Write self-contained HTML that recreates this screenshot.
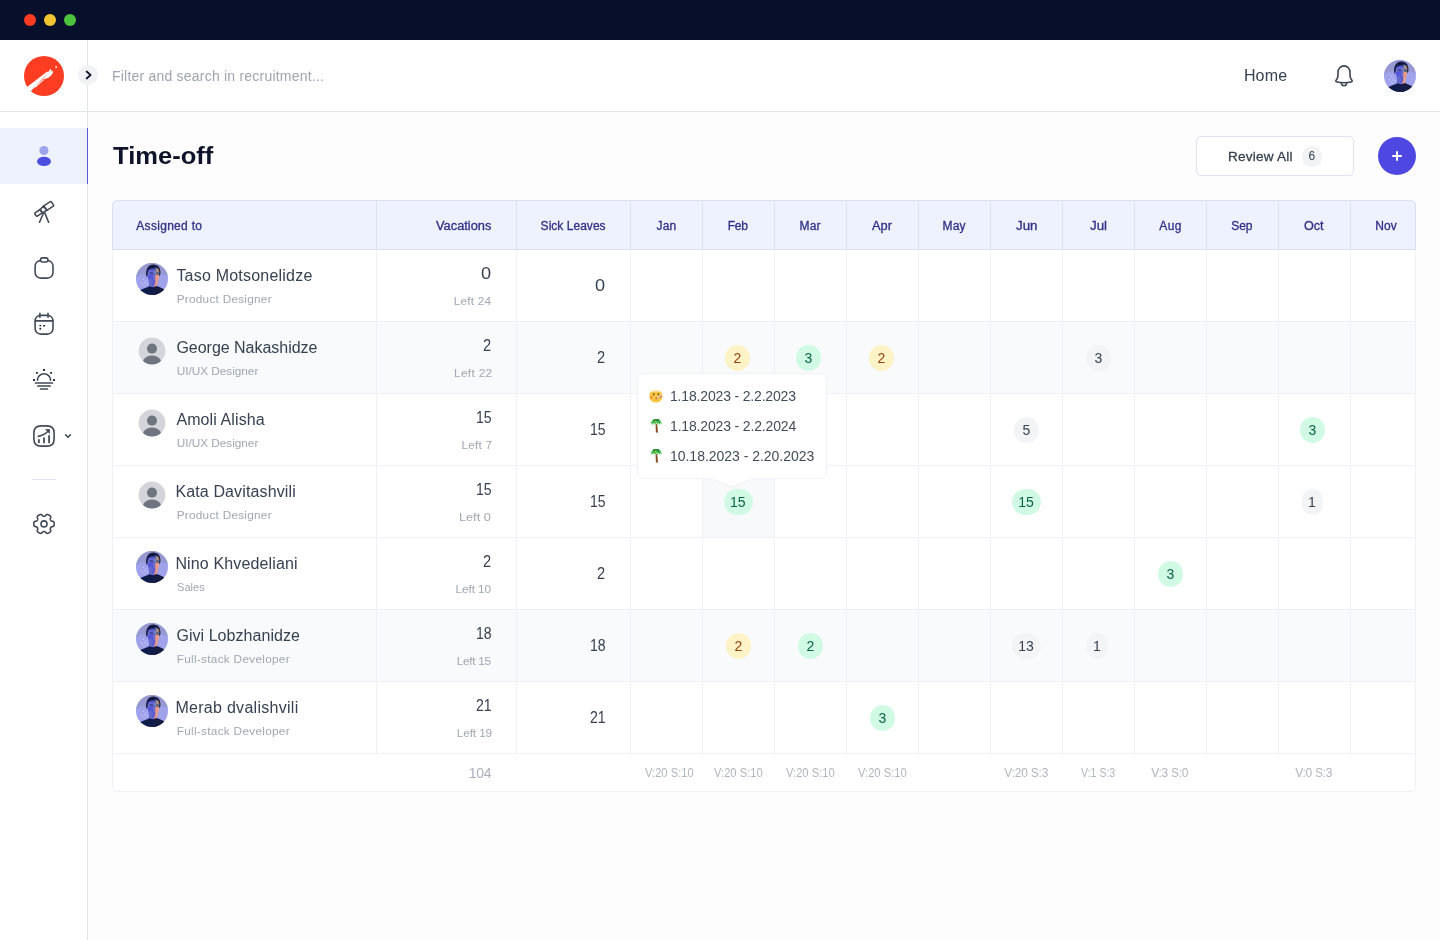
<!DOCTYPE html>
<html lang="en">
<head>
<meta charset="utf-8">
<title>Time-off</title>
<style>
*{box-sizing:border-box;margin:0;padding:0}
html,body{width:1440px;height:940px;overflow:hidden}
body{font-family:"Liberation Sans",sans-serif;background:#fdfdfe;position:relative}
.abs{position:absolute}
svg{display:block;overflow:visible}
.t{position:absolute;white-space:nowrap;line-height:1;font-family:"Liberation Sans",sans-serif}
#titlebar{position:absolute;left:0;top:0;width:1440px;height:40px;background:#070f2b}
.tl{position:absolute;top:14px;width:12px;height:12px;border-radius:50%}
#topnav{position:absolute;left:0;top:40px;width:1440px;height:72px;background:#fff;border-bottom:1px solid #e3e5ec}
#sidebar{position:absolute;left:0;top:40px;width:88px;height:900px;background:#fff;border-right:1px solid #e3e5ec}
#navactive{position:absolute;left:0;top:128px;width:88px;height:56px;background:#eef2ff;border-right:1px solid #5a55dd}
#sdiv{position:absolute;left:32px;top:479px;width:24px;height:1px;background:#e1e4ee}
#review{position:absolute;left:1196px;top:136px;width:158px;height:40px;border:1px solid #e1e3ea;border-radius:5px;background:#fff}
#badge{position:absolute;left:1302px;top:145.500px;width:20px;height:21px;border-radius:50%;background:#f2f3f5}
#plus{position:absolute;left:1378px;top:137px;width:38px;height:38px;border-radius:50%;background:#4e47e2}
#table{position:absolute;left:112px;top:200px;width:1304px;height:592px;border:1px solid #f0f1f5;border-radius:5px;background:#fff}
#thead{position:absolute;left:112px;top:200px;width:1304px;height:50px;background:#eef2ff;border:1px solid #dcdfee;border-radius:5px 5px 0 0}
#tip{position:absolute;left:637px;top:373px;width:190px;height:106px;background:#fff;border:1px solid #f1f2f5;border-radius:7px}
</style>
</head>
<body>
<svg width="0" height="0" style="position:absolute">
<defs>
<clipPath id="avc"><circle cx="16" cy="16" r="16"/></clipPath>
<clipPath id="gvc"><circle cx="14" cy="14" r="13.400"/></clipPath>
</defs>
</svg>
<div id="titlebar">
<div class="tl" style="left:24px;background:#fb3c22"></div>
<div class="tl" style="left:44px;background:#f0c330"></div>
<div class="tl" style="left:64px;background:#4cc13c"></div>
</div>
<div id="topnav"></div>
<div id="sidebar"></div>
<div class="abs" style="left:0;top:111px;width:88px;height:1px;background:#e3e5ec"></div>
<div id="navactive"></div>
<svg class="abs" style="left:24px;top:56px" width="40" height="40" viewBox="0 0 40 40">
<circle cx="20" cy="20" r="20" fill="#ff3d23"/>
<path d="M2 31.800L23.300 15.500l1 1.200L6.300 35.700l-2.800.8z" fill="#fff"/>
<path d="M18.300 23.800l3.700-4.300 3-4.500 1.300-1.900 1.300.8-.8 1.900 1.600-1.100.8 1.300-1.500 3-3 2.600-3.500 1.500z" fill="#fff"/>
<path d="M10.400 31l8.600-7.500.7.800-8.500 7.400z" fill="#fff"/>
<rect x="31.300" y="10.200" width="1.800" height="1.800" fill="#ffc9c0"/>
</svg>
<div class="abs" style="left:78px;top:65px;width:20px;height:20px;border-radius:50%;background:#f1f2f5"></div>
<svg class="abs" style="left:78px;top:65px" width="20" height="20" viewBox="0 0 20 20" fill="none" stroke="#0e1328" stroke-width="1.700" stroke-linecap="round" stroke-linejoin="round"><path d="M8.600 6.500l4 3.500-4 3.500"/></svg>
<svg class="abs" style="left:24px;top:136px" width="40" height="40" viewBox="0 0 40 40"><circle cx="19.900" cy="14.500" r="4.600" fill="#9ea4eb"/><ellipse cx="20" cy="25.400" rx="7" ry="4.600" fill="#4d4de2"/></svg>
<svg class="abs" style="left:28px;top:196px" width="32" height="32" viewBox="0 0 32 32" fill="none" stroke="#424a58" stroke-width="1.6" stroke-linecap="round" stroke-linejoin="round"><path d="M15.500 10.100L22.300 5.700a.8.800 0 0 1 1.100.2l2.100 3.200a.8.800 0 0 1-.2 1.100L18.900 14.300z"/><path d="M12.100 13.500l3.400-3.400 3.400 4.200-4.600 2.600z"/><path d="M7.200 16.900l4.900-3.400 2.200 3.400-5 3.200a.8.800 0 0 1-1.100-.2l-1.300-1.900a.8.800 0 0 1 .3-1.100z"/><path d="M15.400 17.200l-3.900 9M16.800 16.900l3.800 9.300"/></svg>
<svg class="abs" style="left:28px;top:252px" width="32" height="32" viewBox="0 0 32 32" fill="none" stroke="#424a58" stroke-width="1.6" stroke-linecap="round" stroke-linejoin="round"><path d="M12.90 8.6 L19.20 8.6 C22.68 8.6 25 10.92 25 14.40 L25 20.30 C25 23.78 22.68 26.1 19.20 26.1 L12.90 26.1 C9.42 26.1 7.1 23.78 7.1 20.30 L7.1 14.40 C7.1 10.92 9.42 8.6 12.90 8.6Z"/><rect x="12.500" y="5.900" width="7.400" height="4.100" rx="2" fill="#fff"/></svg>
<svg class="abs" style="left:28px;top:308px" width="32" height="32" viewBox="0 0 32 32" fill="none" stroke="#424a58" stroke-width="1.6" stroke-linecap="round" stroke-linejoin="round"><path d="M12.90 7.4 L19.20 7.4 C22.68 7.4 25 9.72 25 13.20 L25 20.30 C25 23.78 22.68 26.1 19.20 26.1 L12.90 26.1 C9.42 26.1 7.1 23.78 7.1 20.30 L7.1 13.20 C7.1 9.72 9.42 7.4 12.90 7.4Z"/><path d="M7.300 12.900H24.800M11.900 5.300v4M20 5.300v4"/><g fill="#1c2140" stroke="none"><circle cx="12.300" cy="17.600" r=".95"/><rect x="15" y="16.900" width="2" height="1.500" rx=".5"/><circle cx="12.300" cy="20.700" r=".95"/></g></svg>
<svg class="abs" style="left:28px;top:364px" width="32" height="32" viewBox="0 0 32 32" fill="none" stroke="#424a58" stroke-width="1.6" stroke-linecap="round" stroke-linejoin="round"><path d="M9.400 16.300a6.600 6.600 0 0 1 13.200 0"/><path d="M7.500 19H24.500M9.800 22H22.200M12.600 25H19.400" stroke-width="1.700"/><g fill="#1f2536" stroke="none"><rect x="15.050" y="5.050" width="1.900" height="1.900" rx=".3"/><rect x="7.950" y="7.950" width="1.900" height="1.900" rx=".3"/><rect x="22.150" y="7.950" width="1.900" height="1.900" rx=".3"/><rect x="5.050" y="15.050" width="1.900" height="1.900" rx=".3"/><rect x="25.050" y="15.050" width="1.900" height="1.900" rx=".3"/></g></svg>
<svg class="abs" style="left:28px;top:420px" width="48" height="32" viewBox="0 0 48 32" fill="none" stroke="#424a58" stroke-width="1.6" stroke-linecap="round" stroke-linejoin="round"><path d="M13.10 5.9 L18.90 5.9 C23.36 5.9 26.1 8.64 26.1 13.10 L26.1 18.90 C26.1 23.36 23.36 26.1 18.90 26.1 L13.10 26.1 C8.64 26.1 5.9 23.36 5.9 18.90 L5.9 13.10 C5.9 8.64 8.64 5.9 13.10 5.9Z"/><path d="M10.900 19.900v2.500M16 18.100v4.400M21.100 15.900v6.600" stroke-width="1.800"/><path d="M10.300 16.400c4-.8 7.500-2.600 10.200-5.600"/><path d="M17.900 9.500h3.700v3.600z" fill="#3c4453" stroke-width=".7"/><path d="M37.6 14.8l2.4 2.5 2.4-2.5"/></svg>
<div id="sdiv"></div>
<svg class="abs" style="left:28px;top:508px" width="32" height="32" viewBox="0 0 32 32" fill="none" stroke="#424a58" stroke-width="1.6" stroke-linecap="round" stroke-linejoin="round"><path d="M26.15 15.90 L26.14 16.25 L26.12 16.61 L26.08 16.96 L26.02 17.31 L25.92 17.65 L25.76 17.97 L25.46 18.26 L24.97 18.47 L24.34 18.61 L23.76 18.73 L23.36 18.87 L23.10 19.06 L22.91 19.27 L22.76 19.49 L22.62 19.72 L22.49 19.96 L22.38 20.20 L22.29 20.47 L22.26 20.79 L22.33 21.21 L22.51 21.77 L22.71 22.38 L22.77 22.92 L22.68 23.31 L22.48 23.62 L22.23 23.87 L21.96 24.10 L21.67 24.31 L21.38 24.51 L21.08 24.69 L20.76 24.86 L20.45 25.02 L20.12 25.16 L19.79 25.28 L19.45 25.37 L19.08 25.39 L18.69 25.27 L18.26 24.95 L17.82 24.47 L17.43 24.04 L17.11 23.76 L16.81 23.63 L16.54 23.57 L16.27 23.55 L16.00 23.55 L15.73 23.55 L15.46 23.57 L15.19 23.63 L14.89 23.76 L14.57 24.04 L14.18 24.47 L13.74 24.95 L13.31 25.27 L12.92 25.39 L12.55 25.37 L12.21 25.28 L11.88 25.16 L11.55 25.02 L11.24 24.86 L10.93 24.69 L10.62 24.51 L10.33 24.31 L10.04 24.10 L9.77 23.87 L9.52 23.62 L9.32 23.31 L9.23 22.92 L9.29 22.38 L9.49 21.77 L9.67 21.21 L9.74 20.79 L9.71 20.47 L9.62 20.20 L9.51 19.96 L9.38 19.72 L9.24 19.49 L9.09 19.27 L8.90 19.06 L8.64 18.87 L8.24 18.73 L7.66 18.61 L7.03 18.47 L6.54 18.26 L6.24 17.97 L6.08 17.65 L5.98 17.31 L5.92 16.96 L5.88 16.61 L5.86 16.25 L5.85 15.90 L5.86 15.55 L5.88 15.19 L5.92 14.84 L5.98 14.49 L6.08 14.15 L6.24 13.83 L6.54 13.54 L7.03 13.33 L7.66 13.19 L8.24 13.07 L8.64 12.93 L8.90 12.74 L9.09 12.53 L9.24 12.31 L9.38 12.08 L9.51 11.84 L9.62 11.60 L9.71 11.33 L9.74 11.01 L9.67 10.59 L9.49 10.03 L9.29 9.42 L9.23 8.88 L9.32 8.49 L9.52 8.18 L9.77 7.93 L10.04 7.70 L10.33 7.49 L10.62 7.29 L10.92 7.11 L11.24 6.94 L11.55 6.78 L11.88 6.64 L12.21 6.52 L12.55 6.43 L12.92 6.41 L13.31 6.53 L13.74 6.85 L14.18 7.33 L14.57 7.76 L14.89 8.04 L15.19 8.17 L15.46 8.23 L15.73 8.25 L16.00 8.25 L16.27 8.25 L16.54 8.23 L16.81 8.17 L17.11 8.04 L17.43 7.76 L17.82 7.33 L18.26 6.85 L18.69 6.53 L19.08 6.41 L19.45 6.43 L19.79 6.52 L20.12 6.64 L20.45 6.78 L20.76 6.94 L21.08 7.11 L21.38 7.29 L21.67 7.49 L21.96 7.70 L22.23 7.93 L22.48 8.18 L22.68 8.49 L22.77 8.88 L22.71 9.42 L22.51 10.03 L22.33 10.59 L22.26 11.01 L22.29 11.33 L22.38 11.60 L22.49 11.84 L22.62 12.08 L22.76 12.31 L22.91 12.53 L23.10 12.74 L23.36 12.93 L23.76 13.07 L24.34 13.19 L24.97 13.33 L25.46 13.54 L25.76 13.83 L25.92 14.15 L26.02 14.49 L26.08 14.84 L26.12 15.19 L26.14 15.55Z"/><circle cx="16" cy="15.900" r="3"/></svg>
<svg class="abs" style="left:1328px;top:60px" width="32" height="32" viewBox="0 0 32 32" fill="none" stroke="#3c4453" stroke-width="1.600" stroke-linecap="round" stroke-linejoin="round">
<path d="M16 5.900C12.600 5.900 10 8.600 10 12.200V15.500C10 17.300 9.400 18.500 8.400 19.700 7.400 20.900 7.700 21.700 9 22 13 22.900 19 22.900 23 22 24.300 21.700 24.600 20.900 23.600 19.700 22.600 18.500 22 17.300 22 15.500V12.200C22 8.600 19.400 5.900 16 5.900Z"/>
<path d="M13.300 23.700C13.700 25 14.700 25.700 16 25.700 17.300 25.700 18.300 25 18.700 23.700"/>
</svg>
<svg class="abs" style="left:1384px;top:60px" width="32" height="32" viewBox="0 0 32 32"><g clip-path="url(#avc)">
  <rect width="32" height="32" fill="#a1a2ec"/>
  <path d="M0 0h32v13.500c-3-1.500-5.500-2.300-8-2.300H10c-4 0-7 1-10 3.500z" fill="#9899d3"/>
  <g fill="#c9cbf3"><rect x="7" y="16" width="1" height="1"/><rect x="9" y="17.500" width="1" height="1"/><rect x="5" y="19" width="1" height="1"/><rect x="8" y="19.500" width="1" height="1"/><rect x="6" y="21" width="1" height="1"/><rect x="9.500" y="21" width="1" height="1"/><rect x="11" y="20" width="1" height="1"/><rect x="7.500" y="23" width="1" height="1"/></g>
  <path d="M10.300 13.500C9.200 6 12.500 1.600 17.200 1.600c5 0 8 3.400 7.100 10.400l-1.300 1-.8-5.200-9.700-.6-1.200 6.300z" fill="#141a3e"/>
  <path d="M11.700 9.500c0-3.200 2.800-4.300 7.700-3.800v17.900h-6.200v-5c-1-1.800-1.500-4.600-1.500-9.100z" fill="#5355df"/>
  <path d="M11.900 9.200c1.600-1.700 4.200-2 7.500-1.400v3.800c-2.600-.8-5.200-.5-7.400.6z" fill="#6a70bd"/>
  <path d="M13 15l3.200 1.300 1.600 3.200-2 4.100h-2.600v-5z" fill="#6a70c4" opacity=".75"/>
  <path d="M16.500 12.500h2.900v4.500h-1.900z" fill="#6f76b8" opacity=".8"/>
  <path d="M19.400 4.600c2.800.2 4.200 2.400 3.900 5.600l-.3 3.200h-3.600z" fill="#8a8ea3"/>
  <path d="M19.400 11.500l3.600.2c0 3.300-.4 5.500-1.500 7.300l-.6 4.700h-3l1.500-5z" fill="#ea9a80"/>
  <path d="M21.600 6.500h1.500v1.800h-1.500z" fill="#ea7a3a"/>
  <path d="M20 9.300h2.700v2.400H20z" fill="#575b74"/>
  <path d="M13.800 9.500h3.200v1.400h-3.200z" fill="#35379f"/>
  <path d="M2 28c4-1.800 8-3 11.200-4.700 2.300.8 5.800.8 8 0 3 1.300 6 2.500 9 4.200V33H2z" fill="#101c4a"/>
  <path d="M19 23.600c1 0 2-.1 2.200-.3 3 1.300 6 2.500 9 4.200V33H17.500z" fill="#171d42"/>
 </g></svg>
<div id="review"></div>
<div id="badge"></div>
<div id="plus"></div><svg class="abs" style="left:1390px;top:149px" width="14" height="14" viewBox="0 0 14 14" stroke="#fff" stroke-width="2" stroke-linecap="butt"><path d="M7 2.200v9.600M2.200 7h9.600"/></svg>

<!-- table -->
<div id="table"></div>
<div id="thead"></div>
<div class="abs" style="left:113px;top:321px;width:1302px;height:1px;background:#f0f1f4"></div>
<svg class="abs" style="left:136px;top:263px" width="32" height="32" viewBox="0 0 32 32"><g clip-path="url(#avc)">
  <rect width="32" height="32" fill="#a1a2ec"/>
  <path d="M0 0h32v13.500c-3-1.500-5.500-2.300-8-2.300H10c-4 0-7 1-10 3.500z" fill="#9899d3"/>
  <g fill="#c9cbf3"><rect x="7" y="16" width="1" height="1"/><rect x="9" y="17.500" width="1" height="1"/><rect x="5" y="19" width="1" height="1"/><rect x="8" y="19.500" width="1" height="1"/><rect x="6" y="21" width="1" height="1"/><rect x="9.500" y="21" width="1" height="1"/><rect x="11" y="20" width="1" height="1"/><rect x="7.500" y="23" width="1" height="1"/></g>
  <path d="M10.300 13.500C9.200 6 12.500 1.600 17.200 1.600c5 0 8 3.400 7.100 10.400l-1.300 1-.8-5.200-9.700-.6-1.200 6.300z" fill="#141a3e"/>
  <path d="M11.700 9.500c0-3.200 2.800-4.300 7.700-3.800v17.900h-6.200v-5c-1-1.800-1.500-4.600-1.500-9.100z" fill="#5355df"/>
  <path d="M11.900 9.200c1.600-1.700 4.200-2 7.500-1.400v3.800c-2.600-.8-5.200-.5-7.400.6z" fill="#6a70bd"/>
  <path d="M13 15l3.200 1.300 1.600 3.200-2 4.100h-2.600v-5z" fill="#6a70c4" opacity=".75"/>
  <path d="M16.500 12.500h2.900v4.500h-1.900z" fill="#6f76b8" opacity=".8"/>
  <path d="M19.400 4.600c2.800.2 4.200 2.400 3.900 5.600l-.3 3.200h-3.600z" fill="#8a8ea3"/>
  <path d="M19.400 11.500l3.600.2c0 3.300-.4 5.500-1.500 7.300l-.6 4.700h-3l1.500-5z" fill="#ea9a80"/>
  <path d="M21.600 6.500h1.500v1.800h-1.500z" fill="#ea7a3a"/>
  <path d="M20 9.300h2.700v2.400H20z" fill="#575b74"/>
  <path d="M13.800 9.500h3.200v1.400h-3.200z" fill="#35379f"/>
  <path d="M2 28c4-1.800 8-3 11.200-4.700 2.300.8 5.800.8 8 0 3 1.300 6 2.500 9 4.200V33H2z" fill="#101c4a"/>
  <path d="M19 23.600c1 0 2-.1 2.200-.3 3 1.300 6 2.500 9 4.200V33H17.500z" fill="#171d42"/>
 </g></svg>
<div class="abs" style="left:113px;top:322px;width:1302px;height:71px;background:#f9fafc"></div>
<div class="abs" style="left:113px;top:393px;width:1302px;height:1px;background:#f0f1f4"></div>
<svg class="abs" style="left:138px;top:337px" width="28" height="28" viewBox="0 0 28 28"><circle cx="14" cy="14" r="13.400" fill="#d3d5da"/>
 <g clip-path="url(#gvc)" fill="#6e7480">
  <circle cx="14" cy="11.600" r="5"/>
  <ellipse cx="14" cy="26.500" rx="9.600" ry="8"/>
 </g></svg>
<div class="abs" style="left:725.00px;top:345px;width:25px;height:26px;border-radius:13px;background:#fef3c7"></div>
<div class="abs" style="left:796.00px;top:345px;width:25px;height:26px;border-radius:13px;background:#d1fae5"></div>
<div class="abs" style="left:869.00px;top:345px;width:25px;height:26px;border-radius:13px;background:#fef3c7"></div>
<div class="abs" style="left:1086.00px;top:345px;width:25px;height:26px;border-radius:13px;background:#f3f4f6"></div>
<div class="abs" style="left:113px;top:465px;width:1302px;height:1px;background:#f0f1f4"></div>
<svg class="abs" style="left:138px;top:409px" width="28" height="28" viewBox="0 0 28 28"><circle cx="14" cy="14" r="13.400" fill="#d3d5da"/>
 <g clip-path="url(#gvc)" fill="#6e7480">
  <circle cx="14" cy="11.600" r="5"/>
  <ellipse cx="14" cy="26.500" rx="9.600" ry="8"/>
 </g></svg>
<div class="abs" style="left:1014.00px;top:417px;width:25px;height:26px;border-radius:13px;background:#f3f4f6"></div>
<div class="abs" style="left:1300.00px;top:417px;width:25px;height:26px;border-radius:13px;background:#d1fae5"></div>
<div class="abs" style="left:703px;top:466px;width:71px;height:71px;background:#f8f9fb"></div>
<div class="abs" style="left:113px;top:537px;width:1302px;height:1px;background:#f0f1f4"></div>
<svg class="abs" style="left:138px;top:481px" width="28" height="28" viewBox="0 0 28 28"><circle cx="14" cy="14" r="13.400" fill="#d3d5da"/>
 <g clip-path="url(#gvc)" fill="#6e7480">
  <circle cx="14" cy="11.600" r="5"/>
  <ellipse cx="14" cy="26.500" rx="9.600" ry="8"/>
 </g></svg>
<div class="abs" style="left:723.90px;top:489px;width:29px;height:26px;border-radius:13px;background:#d1fae5"></div>
<div class="abs" style="left:1012.10px;top:489px;width:29px;height:26px;border-radius:13px;background:#d1fae5"></div>
<div class="abs" style="left:1302.00px;top:489px;width:21px;height:26px;border-radius:13px;background:#f3f4f6"></div>
<div class="abs" style="left:113px;top:609px;width:1302px;height:1px;background:#f0f1f4"></div>
<svg class="abs" style="left:136px;top:551px" width="32" height="32" viewBox="0 0 32 32"><g clip-path="url(#avc)">
  <rect width="32" height="32" fill="#a1a2ec"/>
  <path d="M0 0h32v13.500c-3-1.500-5.500-2.300-8-2.300H10c-4 0-7 1-10 3.500z" fill="#9899d3"/>
  <g fill="#c9cbf3"><rect x="7" y="16" width="1" height="1"/><rect x="9" y="17.500" width="1" height="1"/><rect x="5" y="19" width="1" height="1"/><rect x="8" y="19.500" width="1" height="1"/><rect x="6" y="21" width="1" height="1"/><rect x="9.500" y="21" width="1" height="1"/><rect x="11" y="20" width="1" height="1"/><rect x="7.500" y="23" width="1" height="1"/></g>
  <path d="M10.300 13.500C9.200 6 12.500 1.600 17.200 1.600c5 0 8 3.400 7.100 10.400l-1.300 1-.8-5.200-9.700-.6-1.200 6.300z" fill="#141a3e"/>
  <path d="M11.700 9.500c0-3.200 2.800-4.300 7.700-3.800v17.900h-6.200v-5c-1-1.800-1.500-4.600-1.500-9.100z" fill="#5355df"/>
  <path d="M11.900 9.200c1.600-1.700 4.200-2 7.500-1.400v3.800c-2.600-.8-5.200-.5-7.400.6z" fill="#6a70bd"/>
  <path d="M13 15l3.200 1.300 1.600 3.200-2 4.100h-2.600v-5z" fill="#6a70c4" opacity=".75"/>
  <path d="M16.500 12.500h2.900v4.500h-1.900z" fill="#6f76b8" opacity=".8"/>
  <path d="M19.400 4.600c2.800.2 4.200 2.400 3.900 5.600l-.3 3.200h-3.600z" fill="#8a8ea3"/>
  <path d="M19.400 11.500l3.600.2c0 3.300-.4 5.500-1.500 7.300l-.6 4.700h-3l1.500-5z" fill="#ea9a80"/>
  <path d="M21.600 6.500h1.500v1.800h-1.500z" fill="#ea7a3a"/>
  <path d="M20 9.300h2.700v2.400H20z" fill="#575b74"/>
  <path d="M13.800 9.500h3.200v1.400h-3.200z" fill="#35379f"/>
  <path d="M2 28c4-1.800 8-3 11.200-4.700 2.300.8 5.800.8 8 0 3 1.300 6 2.500 9 4.200V33H2z" fill="#101c4a"/>
  <path d="M19 23.600c1 0 2-.1 2.200-.3 3 1.300 6 2.500 9 4.200V33H17.500z" fill="#171d42"/>
 </g></svg>
<div class="abs" style="left:1158.00px;top:561px;width:25px;height:26px;border-radius:13px;background:#d1fae5"></div>
<div class="abs" style="left:113px;top:610px;width:1302px;height:71px;background:#f9fafc"></div>
<div class="abs" style="left:113px;top:681px;width:1302px;height:1px;background:#f0f1f4"></div>
<svg class="abs" style="left:136px;top:623px" width="32" height="32" viewBox="0 0 32 32"><g clip-path="url(#avc)">
  <rect width="32" height="32" fill="#a1a2ec"/>
  <path d="M0 0h32v13.500c-3-1.500-5.500-2.300-8-2.300H10c-4 0-7 1-10 3.500z" fill="#9899d3"/>
  <g fill="#c9cbf3"><rect x="7" y="16" width="1" height="1"/><rect x="9" y="17.500" width="1" height="1"/><rect x="5" y="19" width="1" height="1"/><rect x="8" y="19.500" width="1" height="1"/><rect x="6" y="21" width="1" height="1"/><rect x="9.500" y="21" width="1" height="1"/><rect x="11" y="20" width="1" height="1"/><rect x="7.500" y="23" width="1" height="1"/></g>
  <path d="M10.300 13.500C9.200 6 12.500 1.600 17.200 1.600c5 0 8 3.400 7.100 10.400l-1.300 1-.8-5.200-9.700-.6-1.200 6.300z" fill="#141a3e"/>
  <path d="M11.700 9.500c0-3.200 2.800-4.300 7.700-3.800v17.900h-6.200v-5c-1-1.800-1.500-4.600-1.500-9.100z" fill="#5355df"/>
  <path d="M11.900 9.200c1.600-1.700 4.200-2 7.500-1.400v3.800c-2.600-.8-5.200-.5-7.400.6z" fill="#6a70bd"/>
  <path d="M13 15l3.200 1.300 1.600 3.200-2 4.100h-2.600v-5z" fill="#6a70c4" opacity=".75"/>
  <path d="M16.500 12.500h2.900v4.500h-1.900z" fill="#6f76b8" opacity=".8"/>
  <path d="M19.400 4.600c2.800.2 4.200 2.400 3.900 5.600l-.3 3.200h-3.600z" fill="#8a8ea3"/>
  <path d="M19.400 11.500l3.600.2c0 3.300-.4 5.500-1.500 7.300l-.6 4.700h-3l1.500-5z" fill="#ea9a80"/>
  <path d="M21.600 6.500h1.500v1.800h-1.500z" fill="#ea7a3a"/>
  <path d="M20 9.300h2.700v2.400H20z" fill="#575b74"/>
  <path d="M13.800 9.500h3.200v1.400h-3.200z" fill="#35379f"/>
  <path d="M2 28c4-1.800 8-3 11.200-4.700 2.300.8 5.800.8 8 0 3 1.300 6 2.500 9 4.200V33H2z" fill="#101c4a"/>
  <path d="M19 23.600c1 0 2-.1 2.200-.3 3 1.300 6 2.500 9 4.200V33H17.500z" fill="#171d42"/>
 </g></svg>
<div class="abs" style="left:726.00px;top:633px;width:25px;height:26px;border-radius:13px;background:#fef3c7"></div>
<div class="abs" style="left:798.00px;top:633px;width:25px;height:26px;border-radius:13px;background:#d1fae5"></div>
<div class="abs" style="left:1011.80px;top:633px;width:29.6px;height:26px;border-radius:13px;background:#f3f4f6"></div>
<div class="abs" style="left:1087.10px;top:633px;width:21px;height:26px;border-radius:13px;background:#f3f4f6"></div>
<div class="abs" style="left:113px;top:753px;width:1302px;height:1px;background:#f0f1f4"></div>
<svg class="abs" style="left:136px;top:695px" width="32" height="32" viewBox="0 0 32 32"><g clip-path="url(#avc)">
  <rect width="32" height="32" fill="#a1a2ec"/>
  <path d="M0 0h32v13.500c-3-1.500-5.500-2.300-8-2.300H10c-4 0-7 1-10 3.500z" fill="#9899d3"/>
  <g fill="#c9cbf3"><rect x="7" y="16" width="1" height="1"/><rect x="9" y="17.500" width="1" height="1"/><rect x="5" y="19" width="1" height="1"/><rect x="8" y="19.500" width="1" height="1"/><rect x="6" y="21" width="1" height="1"/><rect x="9.500" y="21" width="1" height="1"/><rect x="11" y="20" width="1" height="1"/><rect x="7.500" y="23" width="1" height="1"/></g>
  <path d="M10.300 13.500C9.200 6 12.500 1.600 17.200 1.600c5 0 8 3.400 7.100 10.400l-1.300 1-.8-5.200-9.700-.6-1.200 6.300z" fill="#141a3e"/>
  <path d="M11.700 9.500c0-3.200 2.800-4.300 7.700-3.800v17.900h-6.200v-5c-1-1.800-1.500-4.600-1.500-9.100z" fill="#5355df"/>
  <path d="M11.900 9.200c1.600-1.700 4.200-2 7.500-1.400v3.800c-2.600-.8-5.200-.5-7.400.6z" fill="#6a70bd"/>
  <path d="M13 15l3.200 1.300 1.600 3.200-2 4.100h-2.600v-5z" fill="#6a70c4" opacity=".75"/>
  <path d="M16.500 12.500h2.900v4.500h-1.900z" fill="#6f76b8" opacity=".8"/>
  <path d="M19.400 4.600c2.800.2 4.200 2.400 3.900 5.600l-.3 3.200h-3.600z" fill="#8a8ea3"/>
  <path d="M19.400 11.500l3.600.2c0 3.300-.4 5.500-1.500 7.300l-.6 4.700h-3l1.500-5z" fill="#ea9a80"/>
  <path d="M21.600 6.500h1.500v1.800h-1.500z" fill="#ea7a3a"/>
  <path d="M20 9.300h2.700v2.400H20z" fill="#575b74"/>
  <path d="M13.800 9.500h3.200v1.400h-3.200z" fill="#35379f"/>
  <path d="M2 28c4-1.800 8-3 11.200-4.700 2.300.8 5.800.8 8 0 3 1.300 6 2.500 9 4.200V33H2z" fill="#101c4a"/>
  <path d="M19 23.600c1 0 2-.1 2.200-.3 3 1.300 6 2.500 9 4.200V33H17.500z" fill="#171d42"/>
 </g></svg>
<div class="abs" style="left:870.00px;top:705px;width:25px;height:26px;border-radius:13px;background:#d1fae5"></div>
<div class="abs" style="left:376px;top:201px;width:1px;height:48px;background:#dfe1ec"></div>
<div class="abs" style="left:376px;top:250px;width:1px;height:504px;background:#f0f1f4"></div>
<div class="abs" style="left:516px;top:201px;width:1px;height:48px;background:#dfe1ec"></div>
<div class="abs" style="left:516px;top:250px;width:1px;height:504px;background:#f0f1f4"></div>
<div class="abs" style="left:630px;top:201px;width:1px;height:48px;background:#dfe1ec"></div>
<div class="abs" style="left:630px;top:250px;width:1px;height:504px;background:#f0f1f4"></div>
<div class="abs" style="left:702px;top:201px;width:1px;height:48px;background:#dfe1ec"></div>
<div class="abs" style="left:702px;top:250px;width:1px;height:504px;background:#f0f1f4"></div>
<div class="abs" style="left:774px;top:201px;width:1px;height:48px;background:#dfe1ec"></div>
<div class="abs" style="left:774px;top:250px;width:1px;height:504px;background:#f0f1f4"></div>
<div class="abs" style="left:846px;top:201px;width:1px;height:48px;background:#dfe1ec"></div>
<div class="abs" style="left:846px;top:250px;width:1px;height:504px;background:#f0f1f4"></div>
<div class="abs" style="left:918px;top:201px;width:1px;height:48px;background:#dfe1ec"></div>
<div class="abs" style="left:918px;top:250px;width:1px;height:504px;background:#f0f1f4"></div>
<div class="abs" style="left:990px;top:201px;width:1px;height:48px;background:#dfe1ec"></div>
<div class="abs" style="left:990px;top:250px;width:1px;height:504px;background:#f0f1f4"></div>
<div class="abs" style="left:1062px;top:201px;width:1px;height:48px;background:#dfe1ec"></div>
<div class="abs" style="left:1062px;top:250px;width:1px;height:504px;background:#f0f1f4"></div>
<div class="abs" style="left:1134px;top:201px;width:1px;height:48px;background:#dfe1ec"></div>
<div class="abs" style="left:1134px;top:250px;width:1px;height:504px;background:#f0f1f4"></div>
<div class="abs" style="left:1206px;top:201px;width:1px;height:48px;background:#dfe1ec"></div>
<div class="abs" style="left:1206px;top:250px;width:1px;height:504px;background:#f0f1f4"></div>
<div class="abs" style="left:1278px;top:201px;width:1px;height:48px;background:#dfe1ec"></div>
<div class="abs" style="left:1278px;top:250px;width:1px;height:504px;background:#f0f1f4"></div>
<div class="abs" style="left:1350px;top:201px;width:1px;height:48px;background:#dfe1ec"></div>
<div class="abs" style="left:1350px;top:250px;width:1px;height:504px;background:#f0f1f4"></div>
<!-- tooltip -->
<svg class="abs" style="left:705px;top:477px" width="54" height="12" viewBox="0 0 54 12"><path d="M4.500 1.500h45L28.500 9.200c-.9.400-2.100.400-3 0z" fill="#fff" stroke="#f0f1f5" stroke-width="1"/></svg>
<div id="tip"></div>
<div class="abs" style="left:711px;top:477px;width:42px;height:2px;background:#fff"></div>
<svg class="abs" style="left:649px;top:389px" width="14" height="14" viewBox="0 0 14 14">
<circle cx="6.900" cy="7" r="6.600" fill="#f6c544"/>
<path d="M2.600 3.200C3.600 1.500 5.200.5 6.900.5s3.300 1 4.300 2.700C9.800 2.500 8.400 2.200 6.900 2.200s-2.900.3-4.300 1z" fill="#fdf7e4"/>
<circle cx="2.400" cy="8.600" r="1" fill="#ee6a4a"/><circle cx="11.800" cy="8" r="1" fill="#ee6a4a"/>
<rect x="4.100" y="4.300" width="1.400" height="1.900" rx=".5" fill="#7a4519"/><rect x="8.700" y="4.300" width="1.400" height="1.900" rx=".5" fill="#7a4519"/>
<path d="M7.500 9.200l4.800-3" stroke="#c8ccd6" stroke-width="1.100" stroke-linecap="round"/>
<circle cx="7.400" cy="9.400" r=".9" fill="#e4573d"/>
</svg>
<svg class="abs" style="left:649.8px;top:418px" width="12.500" height="15" viewBox="0 0 14 15" preserveAspectRatio="none">
<path d="M6.200 6.500l1.700-.2 1 8.200H6.600z" fill="#a5602f"/>
<path d="M7 6.500l.9-.1.500 8.100h-.9z" fill="#6b3a1c"/>
<path d="M7 1C4 .6 1.300 2.300.6 6.800l1.700-2 .3 2.400L4.400 4.500l1 2.700L7 4.200l1.600 3 1-2.700 1.800 2.700.3-2.400 1.700 2C12.700 2.300 10 .6 7 1z" fill="#3fb649"/>
<path d="M7 1c1.500 0 3 .5 4 1.500L9 3.200 7 2 5 3.300 3 2.500C4 1.500 5.500 1 7 1z" fill="#1f7d33"/>
<rect x="5.600" y="2.600" width="1.200" height="1.200" fill="#f2c230"/>
</svg>
<svg class="abs" style="left:649.8px;top:448px" width="12.500" height="15" viewBox="0 0 14 15" preserveAspectRatio="none">
<path d="M6.200 6.500l1.700-.2 1 8.200H6.600z" fill="#a5602f"/>
<path d="M7 6.500l.9-.1.500 8.100h-.9z" fill="#6b3a1c"/>
<path d="M7 1C4 .6 1.300 2.300.6 6.800l1.700-2 .3 2.400L4.400 4.500l1 2.700L7 4.200l1.600 3 1-2.700 1.800 2.700.3-2.400 1.700 2C12.700 2.300 10 .6 7 1z" fill="#3fb649"/>
<path d="M7 1c1.500 0 3 .5 4 1.500L9 3.200 7 2 5 3.300 3 2.500C4 1.500 5.500 1 7 1z" fill="#1f7d33"/>
<rect x="5.600" y="2.600" width="1.200" height="1.200" fill="#f2c230"/>
</svg>

<!-- text -->
<div id="txt" style="opacity:.999">
<span class="t" style="left:112.00px;top:68px;font-size:14px;line-height:16px;color:#9ea4b0;letter-spacing:0.213px">Filter and search in recruitment...</span>
<span class="t" style="left:1243.90px;top:67px;font-size:16px;line-height:17px;color:#374151;letter-spacing:0.173px">Home</span>
<span class="t" style="left:112.60px;top:143px;font-size:23px;line-height:26px;color:#0d1329;transform:scaleX(1.1100);transform-origin:0 50%;font-weight:700">Time-off</span>
<span class="t" style="left:1227.90px;top:149px;font-size:13.6px;line-height:15px;color:#374151;letter-spacing:0.207px;-webkit-text-stroke:0.3px #374151">Review All</span>
<span class="t" style="left:1308.50px;top:149px;font-size:12px;line-height:14px;color:#374151">6</span>
<span class="t" style="left:136.30px;top:219px;font-size:12px;line-height:14px;color:#322f85;letter-spacing:0.297px;-webkit-text-stroke:0.3px #322f85">Assigned to</span>
<span class="t" style="left:436.20px;top:219px;font-size:12px;line-height:14px;color:#322f85;transform:scaleX(1.0693);transform-origin:0 50%;-webkit-text-stroke:0.3px #322f85">Vacations</span>
<span class="t" style="left:540.60px;top:219px;font-size:12px;line-height:14px;color:#322f85;letter-spacing:0.030px;-webkit-text-stroke:0.3px #322f85">Sick Leaves</span>
<span class="t" style="left:656.50px;top:219px;font-size:12px;line-height:14px;color:#322f85;letter-spacing:0.163px;-webkit-text-stroke:0.3px #322f85">Jan</span>
<span class="t" style="left:727.80px;top:219px;font-size:12px;line-height:14px;color:#322f85;letter-spacing:-0.302px;-webkit-text-stroke:0.3px #322f85">Feb</span>
<span class="t" style="left:799.55px;top:219px;font-size:12px;line-height:14px;color:#322f85;letter-spacing:0.115px;-webkit-text-stroke:0.3px #322f85">Mar</span>
<span class="t" style="left:872.05px;top:219px;font-size:12px;line-height:14px;color:#322f85;transform:scaleX(1.0654);transform-origin:0 50%;-webkit-text-stroke:0.3px #322f85">Apr</span>
<span class="t" style="left:942.55px;top:219px;font-size:12px;line-height:14px;color:#322f85;letter-spacing:0.115px;-webkit-text-stroke:0.3px #322f85">May</span>
<span class="t" style="left:1015.65px;top:219px;font-size:12px;line-height:14px;color:#322f85;transform:scaleX(1.1085);transform-origin:0 50%;-webkit-text-stroke:0.3px #322f85">Jun</span>
<span class="t" style="left:1089.85px;top:219px;font-size:12px;line-height:14px;color:#322f85;transform:scaleX(1.1108);transform-origin:0 50%;-webkit-text-stroke:0.3px #322f85">Jul</span>
<span class="t" style="left:1159.35px;top:219px;font-size:12px;line-height:14px;color:#322f85;letter-spacing:0.311px;-webkit-text-stroke:0.3px #322f85">Aug</span>
<span class="t" style="left:1231.35px;top:219px;font-size:12px;line-height:14px;color:#322f85;letter-spacing:-0.189px;-webkit-text-stroke:0.3px #322f85">Sep</span>
<span class="t" style="left:1303.85px;top:219px;font-size:12px;line-height:14px;color:#322f85;transform:scaleX(1.0500);transform-origin:0 50%;-webkit-text-stroke:0.3px #322f85">Oct</span>
<span class="t" style="left:1375.35px;top:219px;font-size:12px;line-height:14px;color:#322f85;letter-spacing:-0.020px;-webkit-text-stroke:0.3px #322f85">Nov</span>
<span class="t" style="left:176.40px;top:267px;font-size:16px;line-height:17px;color:#374151;letter-spacing:0.211px">Taso Motsonelidze</span>
<span class="t" style="left:176.70px;top:292px;font-size:11.8px;line-height:14px;color:#a0a6b2;letter-spacing:0.252px">Product Designer</span>
<span class="t" style="left:481.30px;top:265px;font-size:16px;line-height:17px;color:#374151;transform:scaleX(1.1333);transform-origin:0 50%">0</span>
<span class="t" style="left:453.80px;top:294px;font-size:11.8px;line-height:14px;color:#a0a6b2;letter-spacing:0.214px">Left 24</span>
<span class="t" style="left:595.30px;top:277px;font-size:16px;line-height:17px;color:#374151;transform:scaleX(1.1333);transform-origin:0 50%">0</span>
<span class="t" style="left:176.40px;top:339px;font-size:16px;line-height:17px;color:#374151;letter-spacing:-0.020px">George Nakashidze</span>
<span class="t" style="left:176.70px;top:364px;font-size:11.8px;line-height:14px;color:#a0a6b2;letter-spacing:-0.025px">UI/UX Designer</span>
<span class="t" style="left:483.30px;top:337px;font-size:16px;line-height:17px;color:#374151;transform:scaleX(0.9111);transform-origin:0 50%">2</span>
<span class="t" style="left:454.00px;top:366px;font-size:11.8px;line-height:14px;color:#a0a6b2;letter-spacing:0.347px">Left 22</span>
<span class="t" style="left:597.30px;top:349px;font-size:16px;line-height:17px;color:#374151;transform:scaleX(0.9111);transform-origin:0 50%">2</span>
<span class="t" style="left:733.50px;top:350px;font-size:14px;line-height:16px;color:#95440f">2</span>
<span class="t" style="left:804.50px;top:350px;font-size:14px;line-height:16px;color:#0a6248">3</span>
<span class="t" style="left:877.50px;top:350px;font-size:14px;line-height:16px;color:#95440f">2</span>
<span class="t" style="left:1094.50px;top:350px;font-size:14px;line-height:16px;color:#374151">3</span>
<span class="t" style="left:176.40px;top:411px;font-size:16px;line-height:17px;color:#374151;letter-spacing:0.106px">Amoli Alisha</span>
<span class="t" style="left:176.70px;top:436px;font-size:11.8px;line-height:14px;color:#a0a6b2;letter-spacing:-0.025px">UI/UX Designer</span>
<span class="t" style="left:475.75px;top:409px;font-size:16px;line-height:17px;color:#374151;transform:scaleX(0.8800);transform-origin:0 50%">15</span>
<span class="t" style="left:461.40px;top:438px;font-size:11.8px;line-height:14px;color:#a0a6b2;letter-spacing:0.249px">Left 7</span>
<span class="t" style="left:589.75px;top:421px;font-size:16px;line-height:17px;color:#374151;transform:scaleX(0.8800);transform-origin:0 50%">15</span>
<span class="t" style="left:1022.50px;top:422px;font-size:14px;line-height:16px;color:#374151">5</span>
<span class="t" style="left:1308.50px;top:422px;font-size:14px;line-height:16px;color:#0a6248">3</span>
<span class="t" style="left:175.40px;top:483px;font-size:16px;line-height:17px;color:#374151;letter-spacing:0.130px">Kata Davitashvili</span>
<span class="t" style="left:176.70px;top:508px;font-size:11.8px;line-height:14px;color:#a0a6b2;letter-spacing:0.252px">Product Designer</span>
<span class="t" style="left:475.75px;top:481px;font-size:16px;line-height:17px;color:#374151;transform:scaleX(0.8800);transform-origin:0 50%">15</span>
<span class="t" style="left:459.40px;top:510px;font-size:11.8px;line-height:14px;color:#a0a6b2;transform:scaleX(1.0750);transform-origin:0 50%">Left 0</span>
<span class="t" style="left:589.75px;top:493px;font-size:16px;line-height:17px;color:#374151;transform:scaleX(0.8800);transform-origin:0 50%">15</span>
<span class="t" style="left:730.01px;top:494px;font-size:14px;line-height:16px;color:#0a6248">15</span>
<span class="t" style="left:1018.21px;top:494px;font-size:14px;line-height:16px;color:#0a6248">15</span>
<span class="t" style="left:1308.00px;top:494px;font-size:14px;line-height:16px;color:#374151">1</span>
<span class="t" style="left:175.40px;top:555px;font-size:16px;line-height:17px;color:#374151;letter-spacing:0.138px">Nino Khvedeliani</span>
<span class="t" style="left:176.70px;top:580px;font-size:11.8px;line-height:14px;color:#a0a6b2;transform:scaleX(0.9388);transform-origin:0 50%">Sales</span>
<span class="t" style="left:483.30px;top:553px;font-size:16px;line-height:17px;color:#374151;transform:scaleX(0.9111);transform-origin:0 50%">2</span>
<span class="t" style="left:455.60px;top:582px;font-size:11.8px;line-height:14px;color:#a0a6b2;letter-spacing:-0.086px">Left 10</span>
<span class="t" style="left:597.30px;top:565px;font-size:16px;line-height:17px;color:#374151;transform:scaleX(0.9111);transform-origin:0 50%">2</span>
<span class="t" style="left:1166.50px;top:566px;font-size:14px;line-height:16px;color:#0a6248">3</span>
<span class="t" style="left:176.40px;top:627px;font-size:16px;line-height:17px;color:#374151;letter-spacing:0.050px">Givi Lobzhanidze</span>
<span class="t" style="left:176.70px;top:652px;font-size:11.8px;line-height:14px;color:#a0a6b2;letter-spacing:0.285px">Full-stack Developer</span>
<span class="t" style="left:475.75px;top:625px;font-size:16px;line-height:17px;color:#374151;transform:scaleX(0.8800);transform-origin:0 50%">18</span>
<span class="t" style="left:456.80px;top:654px;font-size:11.8px;line-height:14px;color:#a0a6b2;letter-spacing:-0.286px">Left 15</span>
<span class="t" style="left:589.75px;top:637px;font-size:16px;line-height:17px;color:#374151;transform:scaleX(0.8800);transform-origin:0 50%">18</span>
<span class="t" style="left:734.50px;top:638px;font-size:14px;line-height:16px;color:#95440f">2</span>
<span class="t" style="left:806.50px;top:638px;font-size:14px;line-height:16px;color:#0a6248">2</span>
<span class="t" style="left:1018.21px;top:638px;font-size:14px;line-height:16px;color:#374151">13</span>
<span class="t" style="left:1093.10px;top:638px;font-size:14px;line-height:16px;color:#374151">1</span>
<span class="t" style="left:175.40px;top:699px;font-size:16px;line-height:17px;color:#374151;letter-spacing:0.287px">Merab dvalishvili</span>
<span class="t" style="left:176.70px;top:724px;font-size:11.8px;line-height:14px;color:#a0a6b2;letter-spacing:0.285px">Full-stack Developer</span>
<span class="t" style="left:475.75px;top:697px;font-size:16px;line-height:17px;color:#374151;transform:scaleX(0.8800);transform-origin:0 50%">21</span>
<span class="t" style="left:456.80px;top:726px;font-size:11.8px;line-height:14px;color:#a0a6b2;letter-spacing:-0.119px">Left 19</span>
<span class="t" style="left:589.75px;top:709px;font-size:16px;line-height:17px;color:#374151;transform:scaleX(0.8800);transform-origin:0 50%">21</span>
<span class="t" style="left:878.50px;top:710px;font-size:14px;line-height:16px;color:#0a6248">3</span>
<span class="t" style="left:468.80px;top:765px;font-size:14px;line-height:16px;color:#aab0ba;letter-spacing:-0.336px">104</span>
<span class="t" style="left:644.70px;top:766px;font-size:12px;line-height:14px;color:#b0b5bf;transform:scaleX(0.9318);transform-origin:0 50%">V:20 S:10</span>
<span class="t" style="left:713.80px;top:766px;font-size:12px;line-height:14px;color:#b0b5bf;transform:scaleX(0.9318);transform-origin:0 50%">V:20 S:10</span>
<span class="t" style="left:785.80px;top:766px;font-size:12px;line-height:14px;color:#b0b5bf;transform:scaleX(0.9318);transform-origin:0 50%">V:20 S:10</span>
<span class="t" style="left:857.80px;top:766px;font-size:12px;line-height:14px;color:#b0b5bf;transform:scaleX(0.9318);transform-origin:0 50%">V:20 S:10</span>
<span class="t" style="left:1004.35px;top:766px;font-size:12px;line-height:14px;color:#b0b5bf;letter-spacing:-0.230px">V:20 S:3</span>
<span class="t" style="left:1080.74px;top:766px;font-size:12px;line-height:14px;color:#b0b5bf;transform:scaleX(0.8800);transform-origin:0 50%">V:1 S:3</span>
<span class="t" style="left:1151.35px;top:766px;font-size:12px;line-height:14px;color:#b0b5bf;letter-spacing:-0.323px">V:3 S:0</span>
<span class="t" style="left:1295.35px;top:766px;font-size:12px;line-height:14px;color:#b0b5bf;letter-spacing:-0.323px">V:0 S:3</span>
<span class="t" style="left:670.00px;top:388px;font-size:14px;line-height:16px;color:#434c5b;letter-spacing:-0.170px">1.18.2023 - 2.2.2023</span>
<span class="t" style="left:670.00px;top:418px;font-size:14px;line-height:16px;color:#434c5b;letter-spacing:-0.160px">1.18.2023 - 2.2.2024</span>
<span class="t" style="left:670.00px;top:448px;font-size:14px;line-height:16px;color:#434c5b;letter-spacing:-0.029px">10.18.2023 - 2.20.2023</span>
</div>
</body>
</html>
